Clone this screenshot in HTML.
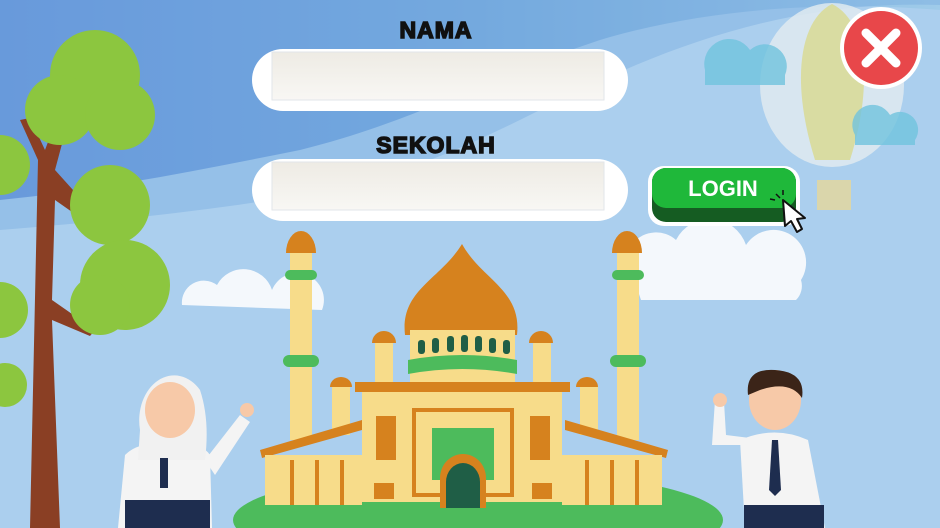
<!DOCTYPE html>
<html><head><style>
html,body{margin:0;padding:0;width:940px;height:528px;overflow:hidden;background:#a9cdee}
svg{display:block}
text{font-family:"Liberation Sans",sans-serif}
</style></head><body>
<svg width="940" height="528" viewBox="0 0 940 528" xmlns="http://www.w3.org/2000/svg">
<defs>
<linearGradient id="sky" x1="0" y1="0" x2="1" y2="0"><stop offset="0" stop-color="#5a8ad8"/><stop offset="0.5" stop-color="#6fa6dd"/><stop offset="1" stop-color="#9fcbe9"/></linearGradient>
<linearGradient id="inp" x1="0" y1="0" x2="0" y2="1"><stop offset="0" stop-color="#eeebe4"/><stop offset="1" stop-color="#f8f7f4"/></linearGradient>
</defs>
<rect width="940" height="528" fill="#abcfee"/>
<path d="M0 0 H940 V10 C820 0 700 10 600 40 C480 80 420 120 300 150 C200 170 100 190 0 200 Z" fill="url(#sky)"/>
<path d="M0 0 H940 V5 C800 0 680 40 560 100 C480 140 420 170 330 190 C220 210 120 220 0 230 Z" fill="#79aee0" opacity="0.45"/>
<!-- balloon -->
<ellipse cx="832" cy="85" rx="72" ry="82" fill="#dfeaf0" opacity="0.85"/>
<path d="M832 4 C800 20 790 80 815 160 L850 160 C875 80 865 20 832 4Z" fill="#d9d98e" opacity="0.8"/>
<rect x="817" y="180" width="34" height="30" fill="#e6d79a" opacity="0.8"/>
<path d="M705 70 a25 25 0 0 1 45 -20 a22 22 0 0 1 35 25 v10 h-80z" fill="#70c3dd" opacity="0.8"/>
<path d="M855 135 a20 20 0 0 1 35 -20 a18 18 0 0 1 25 25 v5 h-60z" fill="#70c3dd" opacity="0.8"/>
<!-- clouds -->
<path d="M182 305 a22 22 0 0 1 35 -20 a30 30 0 0 1 55 5 a20 20 0 0 1 50 20 z" fill="#f4f8fc"/>
<path d="M636 285 a30 30 0 0 1 40 -45 a38 38 0 0 1 70 5 a25 25 0 0 1 55 35 a20 20 0 0 1 -5 20 h-155z" fill="#f4f8fc"/>
<!-- tree -->
<path d="M30 528 L38 160 L20 120 L30 118 L45 150 L60 110 L70 114 L55 170 L100 220 L92 226 L55 200 L52 300 L95 330 L90 336 L52 320 L60 528Z" fill="#8a3f24"/>
<g fill="#8cc63f">
<circle cx="95" cy="75" r="45"/><circle cx="60" cy="110" r="35"/><circle cx="120" cy="115" r="35"/>
<circle cx="110" cy="205" r="40"/><circle cx="125" cy="285" r="45"/><circle cx="100" cy="305" r="30"/>
<circle cx="0" cy="165" r="30"/><circle cx="0" cy="310" r="28"/><circle cx="5" cy="385" r="22"/>
</g>
<!-- ground -->
<ellipse cx="478" cy="520" rx="245" ry="50" fill="#4dbb5c"/>
<!-- mosque -->
<g>
<rect x="290" y="250" width="22" height="190" fill="#f7dc8a"/><path d="M286 253 a15 22 0 0 1 30 0z" fill="#d6821e"/>
<rect x="285" y="270" width="32" height="10" rx="5" fill="#4dbb5c"/><rect x="283" y="355" width="36" height="12" rx="6" fill="#4dbb5c"/>
<rect x="617" y="250" width="22" height="190" fill="#f7dc8a"/><path d="M612 253 a15 22 0 0 1 30 0z" fill="#d6821e"/>
<rect x="612" y="270" width="32" height="10" rx="5" fill="#4dbb5c"/><rect x="610" y="355" width="36" height="12" rx="6" fill="#4dbb5c"/>
<rect x="332" y="385" width="18" height="50" fill="#f7dc8a"/><path d="M330 387 a11 10 0 0 1 22 0z" fill="#d6821e"/>
<rect x="580" y="385" width="18" height="50" fill="#f7dc8a"/><path d="M576 387 a11 10 0 0 1 22 0z" fill="#d6821e"/>
<rect x="375" y="340" width="18" height="50" fill="#f7dc8a"/><path d="M372 343 a12 12 0 0 1 24 0z" fill="#d6821e"/>
<rect x="533" y="340" width="18" height="50" fill="#f7dc8a"/><path d="M529 343 a12 12 0 0 1 24 0z" fill="#d6821e"/>
<path d="M462 244 C440 280 400 290 405 335 L517 335 C522 290 482 280 462 244Z" fill="#d6821e"/>
<rect x="410" y="330" width="105" height="55" fill="#f7dc8a"/>
<g fill="#1f5e46"><rect x="418" y="340" width="7" height="14" rx="3"/><rect x="432" y="338" width="7" height="15" rx="3"/><rect x="447" y="336" width="7" height="16" rx="3"/><rect x="461" y="335" width="7" height="17" rx="3"/><rect x="475" y="336" width="7" height="16" rx="3"/><rect x="489" y="338" width="7" height="15" rx="3"/><rect x="503" y="340" width="7" height="14" rx="3"/></g>
<path d="M408 360 Q462 350 517 360 L517 374 Q462 364 408 374Z" fill="#4dbb5c"/>
<rect x="355" y="382" width="215" height="10" fill="#d6821e"/>
<rect x="362" y="392" width="200" height="110" fill="#f7dc8a"/>
<path d="M260 450 L362 420 L362 430 L262 458Z M565 420 L668 450 L666 458 L565 430Z" fill="#d6821e"/>
<rect x="265" y="455" width="97" height="50" fill="#f7dc8a"/><rect x="562" y="455" width="100" height="50" fill="#f7dc8a"/>
<g fill="#d6821e"><rect x="290" y="460" width="4" height="45"/><rect x="315" y="460" width="4" height="45"/><rect x="340" y="460" width="4" height="45"/><rect x="585" y="460" width="4" height="45"/><rect x="610" y="460" width="4" height="45"/><rect x="635" y="460" width="4" height="45"/>
<rect x="376" y="416" width="20" height="44"/><rect x="530" y="416" width="20" height="44"/><rect x="374" y="483" width="20" height="16"/><rect x="532" y="483" width="20" height="16"/></g>
<rect x="414" y="410" width="98" height="85" fill="none" stroke="#d6821e" stroke-width="4"/>
<rect x="432" y="428" width="62" height="52" fill="#4dbb5c"/>
<path d="M440 508 V478 a23 24 0 0 1 46 0 V508Z" fill="#d6821e"/>
<path d="M446 508 V482 a17 19 0 0 1 34 0 V508Z" fill="#1f5e46"/>
</g>
<!-- girl -->
<path d="M118 528 L125 455 Q140 440 170 445 Q200 440 210 455 L212 528Z" fill="#f4f4f4"/>
<path d="M125 500 h85 v28 h-85z" fill="#1e2d4f"/>
<path d="M140 430 a35 45 0 0 1 60 -40 Q210 420 205 460 L138 460Z" fill="#f1f1f1"/>
<ellipse cx="170" cy="410" rx="25" ry="28" fill="#f7c9a8"/>
<rect x="160" y="458" width="8" height="30" fill="#1e2d4f"/>
<path d="M205 460 L240 415 L250 422 L215 475Z" fill="#f4f4f4"/><circle cx="247" cy="410" r="7" fill="#f7c9a8"/>
<!-- boy -->
<path d="M745 528 L740 440 Q775 425 808 440 L825 528Z" fill="#f4f4f4"/>
<path d="M744 505 h80 v23 h-80z" fill="#1e2d4f"/>
<ellipse cx="775" cy="400" rx="26" ry="30" fill="#f7c9a8"/>
<path d="M748 395 Q745 368 775 370 Q806 372 802 398 Q790 380 760 390Z" fill="#3b2418"/>
<path d="M772 440 l6 0 l3 50 l-6 6 l-6 -6z" fill="#1e2d4f"/>
<path d="M745 445 L712 445 L715 400 L724 402 L726 435 L750 438Z" fill="#f4f4f4"/><circle cx="720" cy="400" r="7" fill="#f7c9a8"/>
<!-- close -->
<circle cx="881" cy="48" r="41" fill="#fff"/><circle cx="881" cy="48" r="37" fill="#e8474a"/>
<path d="M866 33 L896 63 M896 33 L866 63" stroke="#fff" stroke-width="9" stroke-linecap="round"/>
<!-- inputs -->
<rect x="252" y="49" width="376" height="62" rx="31" fill="#fff"/>
<rect x="272" y="52" width="332" height="48" fill="url(#inp)" stroke="#e2e6ea"/>
<rect x="252" y="159" width="376" height="62" rx="31" fill="#fff"/>
<rect x="272" y="162" width="332" height="48" fill="url(#inp)" stroke="#e2e6ea"/>
<text x="436" y="38" text-anchor="middle" font-size="23" font-weight="900" fill="#111" stroke="#111" stroke-width="1.5" letter-spacing="1">NAMA</text>
<text x="436" y="153" text-anchor="middle" font-size="23" font-weight="900" fill="#111" stroke="#111" stroke-width="1.5" letter-spacing="1">SEKOLAH</text>
<!-- login -->
<rect x="648" y="166" width="152" height="60" rx="16" fill="#fff"/>
<rect x="652" y="168" width="144" height="54" rx="14" fill="#155c22"/>
<rect x="652" y="168" width="144" height="40" rx="14" fill="#1fb83a"/>
<text x="723" y="196" text-anchor="middle" font-size="22" font-weight="bold" fill="#fff">LOGIN</text>
<path d="M783 200 L785 226 L791 221 L797 232 L802 229 L797 219 L805 218 Z" fill="#fff" stroke="#111" stroke-width="2" stroke-linejoin="round"/>
<path d="M776 194 l4 4 M770 199 l5 1 M783 190 l0 5" stroke="#111" stroke-width="1.5"/>
</svg>
</body></html>
